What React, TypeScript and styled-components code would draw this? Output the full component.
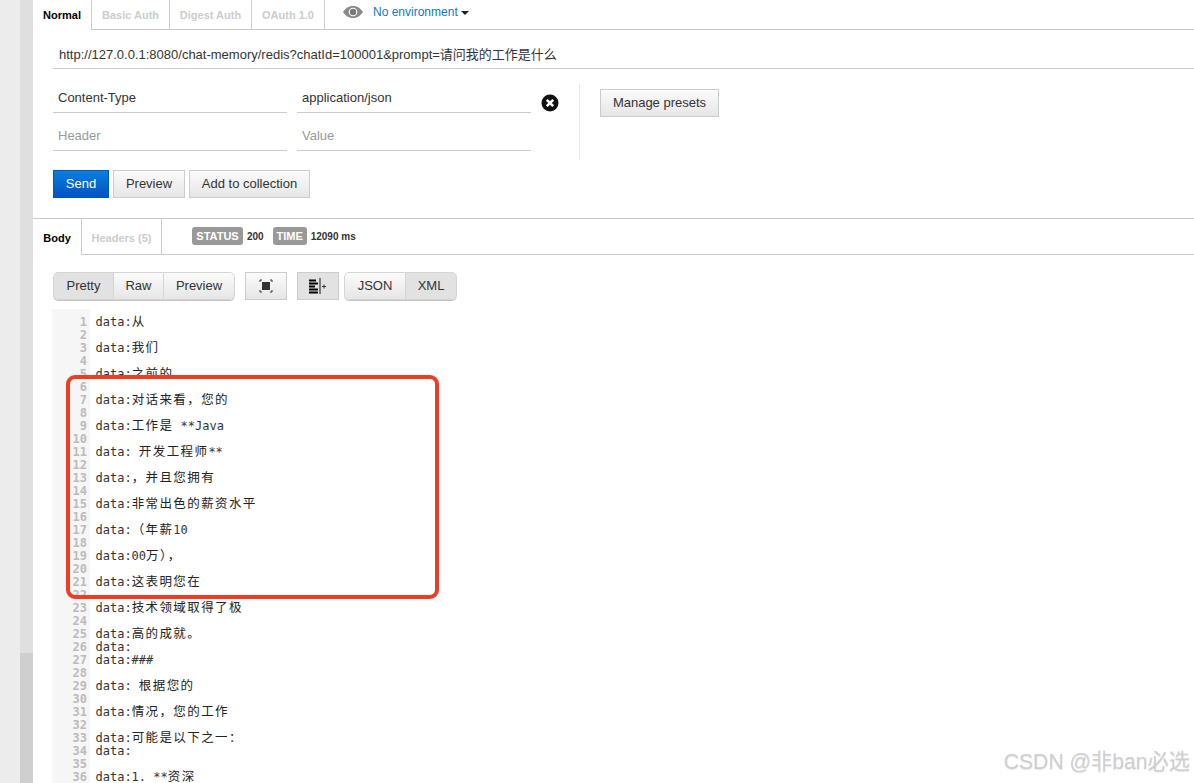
import React from 'react';
import styled, { createGlobalStyle } from 'styled-components';

const GlobalStyle = createGlobalStyle`
    html, body {
        margin: 0;
        height: 783px;
        overflow: hidden;
        background: #fff;
        font-family: "Liberation Sans", Arial, "Noto Sans CJK SC", sans-serif;
    }
`;

const Page = styled.div`
    position: relative;
    display: flex;
    width: 1194px;
    height: 783px;
    overflow: hidden;
`;

const Rail = styled.div`
    width: 20px;
    background: #ececec;
`;

const Scrollbar = styled.div`
    width: 13px;
    display: flex;
    flex-direction: column;
    background: #cfcfcf;

    &::before {
        content: "";
        height: 653px;
        background: #dfdfdf;
    }
`;

const Main = styled.div`
    flex: 1;
    min-width: 0;
`;

const TabBar = styled.div<{ $height: number }>`
    display: flex;
    height: ${p => p.$height}px;
    box-sizing: border-box;
    border-bottom: 1px solid #ccc;
`;

const Tab = styled.div<{ $width: number; $active?: boolean; $drop?: number }>`
    width: ${p => p.$width}px;
    box-sizing: border-box;
    display: flex;
    align-items: center;
    justify-content: center;
    padding-top: ${p => p.$drop ?? 0}px;
    font-size: 11px;
    font-weight: bold;
    color: ${p => (p.$active ? '#000' : '#ccc')};
    border-right: 1px solid #ccc;
    background: #fff;
    margin-bottom: ${p => (p.$active ? '-1px' : '0')};
`;

const Environment = styled.div`
    display: flex;
    align-items: center;
    margin-left: 18px;
    height: 24px;
    font-size: 12px;
    color: #0f7ac6;
`;

const EnvironmentName = styled.span`
    margin-left: 10px;
`;

const Caret = styled.span`
    width: 0;
    height: 0;
    margin-left: 3px;
    margin-top: 2px;
    border-left: 4px solid transparent;
    border-right: 4px solid transparent;
    border-top: 4px solid #222;
`;

const Builder = styled.div`
    padding: 10px 0 20px 20px;
    height: 188px;
    box-sizing: border-box;
`;

const UrlField = styled.div`
    height: 29px;
    box-sizing: border-box;
    padding: 7px 0 0 6px;
    font-size: 13px;
    line-height: 16px;
    color: #333;
    border-bottom: 1px solid #ccc;
`;

const HeaderArea = styled.div`
    display: flex;
    margin-top: 15px;
    height: 76px;
`;

const HeaderGrid = styled.div`
    display: grid;
    grid-template-columns: 234px 234px;
    grid-auto-rows: 29px;
    column-gap: 10px;
    row-gap: 9px;
`;

const HeaderCell = styled.div<{ $placeholder?: boolean }>`
    box-sizing: border-box;
    padding: 6px 0 0 5px;
    font-size: 13px;
    line-height: 16px;
    color: ${p => (p.$placeholder ? '#999' : '#333')};
    border-bottom: 1px solid #ccc;
`;

const RemoveIcon = styled.svg`
    width: 18px;
    height: 18px;
    margin: 10px 0 0 10px;
`;

const Divider = styled.div`
    width: 1px;
    margin-left: 20px;
    background: #e8e8e8;
`;

const Button = styled.div<{ $width: number; $pressed?: boolean }>`
    width: ${p => p.$width}px;
    height: 28px;
    box-sizing: border-box;
    display: flex;
    align-items: center;
    justify-content: center;
    padding-bottom: 2px;
    font-size: 13px;
    color: #333;
    border: 1px solid #ccc;
    background: ${p =>
        p.$pressed ? '#e2e2e2' : 'linear-gradient(#fbfbfb, #e6e6e6)'};
`;

const PresetsButton = styled(Button)`
    margin: 5px 0 0 20px;
`;

const ActionRow = styled.div`
    display: flex;
    gap: 4px;
    margin-top: 10px;
`;

const SendButton = styled(Button)`
    color: #fff;
    border: 1px solid #0055b8;
    background: linear-gradient(#0a80dd, #0052c2);
`;

const ResponseTop = styled.div`
    border-top: 1px solid #ccc;
`;

const StatusGroup = styled.div`
    display: flex;
    align-items: center;
    height: 18px;
    margin: 8px 0 0 30px;
`;

const Badge = styled.span<{ $width: number }>`
    width: ${p => p.$width}px;
    height: 18px;
    box-sizing: border-box;
    display: flex;
    align-items: center;
    justify-content: center;
    border-radius: 3px;
    background: #999;
    color: #fff;
    font-size: 11px;
    font-weight: bold;
`;

const StatusValue = styled.span<{ $gap: number }>`
    margin: 0 ${p => p.$gap}px 0 4px;
    font-size: 10px;
    font-weight: bold;
    color: #333;
`;

const Toolbar = styled.div`
    display: flex;
    margin: 17px 0 0 20px;
`;

const Segment = styled.div<{ $gap?: number }>`
    display: flex;
    margin-right: ${p => p.$gap ?? 0}px;
    border-radius: 5px;
    overflow: hidden;
    box-shadow: 0 1px 0 #c4c4c4;
`;

const SegmentButton = styled(Button)`
    border-width: 1px 0 1px 1px;
    border-color: #d4d4d4;

    &:first-child {
        border-radius: 5px 0 0 5px;
    }

    &:last-child {
        border-right-width: 1px;
        border-radius: 0 5px 5px 0;
    }
`;

const IconButton = styled(Button)<{ $gap: number }>`
    margin-right: ${p => p.$gap}px;
    padding-bottom: 0;
`;

const CodeBlock = styled.div`
    display: grid;
    grid-template-columns: 38px 1fr;
    margin: 9px 0 0 19px;
    padding-top: 7px;
    font-family: "DejaVu Sans Mono", "Liberation Mono", monospace;
    font-size: 12px;
    line-height: 13px;
    background: linear-gradient(to right, #f6f6f6 38px, #fff 38px);
`;

const LineNumber = styled.div`
    height: 13px;
    padding-right: 3px;
    text-align: right;
    color: #bbb;
    font-weight: bold;
`;

const LineText = styled.div`
    height: 13px;
    padding-left: 5.5px;
    color: #333;
    white-space: pre;
`;

const Wide = styled.span`
    font-family: "Noto Sans CJK SC", sans-serif;
    font-size: 12.5px;
    line-height: 0;
    letter-spacing: 1.4px;
    color: #222;
`;

const Highlight = styled.div`
    position: absolute;
    left: 66px;
    top: 375px;
    width: 373px;
    height: 224px;
    box-sizing: border-box;
    border: 4px solid #ee3d25;
    border-radius: 9px;
`;

const Watermark = styled.div`
    position: absolute;
    right: 4px;
    bottom: 8px;
    font-size: 21.2px;
    line-height: 26px;
    color: #cfcfcf;
    text-shadow: 0 1px 1px #e8e8e8;
    font-family: "Liberation Sans", "Noto Sans CJK SC", sans-serif;
`;

const requestTabs = [
    { label: 'Normal', width: 59, active: true },
    { label: 'Basic Auth', width: 78 },
    { label: 'Digest Auth', width: 82 },
    { label: 'OAuth 1.0', width: 73 },
];

const codeLines: Record<number, string> = {
    1: 'data:从',
    3: 'data:我们',
    5: 'data:之前的',
    7: 'data:对话来看，您的',
    9: 'data:工作是 **Java',
    11: 'data: 开发工程师**',
    13: 'data:，并且您拥有',
    15: 'data:非常出色的薪资水平',
    17: 'data:（年薪10',
    19: 'data:00万），',
    21: 'data:这表明您在',
    23: 'data:技术领域取得了极',
    25: 'data:高的成就。',
    26: 'data:',
    27: 'data:###',
    29: 'data: 根据您的',
    31: 'data:情况，您的工作',
    33: 'data:可能是以下之一：',
    34: 'data:',
    36: 'data:1. **资深',
};

// chinese runs get their own font and spacing so they line up double width
const renderCode = (text: string) =>
    text.split(/([\u3000-\u9fff\uff00-\uffef]+)/).map((part, i) =>
        i % 2 === 1 ? <Wide key={i}>{part}</Wide> : part
    );

const App: React.FC = () => {
    return (
        <Page>
            <GlobalStyle />
            <Rail />
            <Scrollbar />
            <Main>
                <TabBar $height={30}>
                    {requestTabs.map(tab => (
                        <Tab key={tab.label} $width={tab.width} $active={tab.active}>
                            {tab.label}
                        </Tab>
                    ))}
                    <Environment>
                        <svg width="20" height="12" viewBox="0 0 20 12">
                            <path d="M0 6C3 1.500 6.500 0 10 0s7 1.500 10 6c-3 4.500-6.500 6-10 6S3 10.500 0 6z" fill="#8a8a8a" />
                            <circle cx="10" cy="6" r="4.300" fill="#fff" />
                            <circle cx="10" cy="6" r="3.200" fill="#777" />
                        </svg>
                        <EnvironmentName>No environment</EnvironmentName>
                        <Caret />
                    </Environment>
                </TabBar>

                <Builder>
                    <UrlField>http://127.0.0.1:8080/chat-memory/redis?chatId=100001&amp;prompt=请问我的工作是什么</UrlField>
                    <HeaderArea>
                        <HeaderGrid>
                            <HeaderCell>Content-Type</HeaderCell>
                            <HeaderCell>application/json</HeaderCell>
                            <HeaderCell $placeholder>Header</HeaderCell>
                            <HeaderCell $placeholder>Value</HeaderCell>
                        </HeaderGrid>
                        <RemoveIcon viewBox="0 0 18 18">
                            <circle cx="9" cy="9" r="8.500" fill="#111" />
                            <path d="M5.800 5.800l6.400 6.400M12.200 5.800l-6.400 6.400" stroke="#fff" strokeWidth="2.600" />
                        </RemoveIcon>
                        <Divider />
                        <PresetsButton $width={119}>Manage presets</PresetsButton>
                    </HeaderArea>
                    <ActionRow>
                        <SendButton $width={56}>Send</SendButton>
                        <Button $width={72}>Preview</Button>
                        <Button $width={121}>Add to collection</Button>
                    </ActionRow>
                </Builder>

                <ResponseTop>
                    <TabBar $height={36}>
                        <Tab $width={49} $active $drop={2}>Body</Tab>
                        <Tab $width={80} $drop={2}>Headers (5)</Tab>
                        <StatusGroup>
                            <Badge $width={51}>STATUS</Badge>
                            <StatusValue $gap={9}>200</StatusValue>
                            <Badge $width={34}>TIME</Badge>
                            <StatusValue $gap={0}>12090 ms</StatusValue>
                        </StatusGroup>
                    </TabBar>

                    <Toolbar>
                        <Segment $gap={10}>
                            <SegmentButton $width={60} $pressed>Pretty</SegmentButton>
                            <SegmentButton $width={50}>Raw</SegmentButton>
                            <SegmentButton $width={72}>Preview</SegmentButton>
                        </Segment>
                        <IconButton $width={42} $gap={10}>
                            <svg width="14" height="14" viewBox="0 0 14 14">
                                <rect x="3" y="3" width="8" height="8" fill="#333" />
                                <path d="M1 3V1h2M11 1h2v2M13 11v2h-2M3 13H1v-2" stroke="#333" fill="none" />
                            </svg>
                        </IconButton>
                        <IconButton $width={42} $gap={5} $pressed>
                            <svg width="18" height="16" viewBox="0 0 18 16">
                                <path d="M0 2.500h7M0 5.500h9M0 8.500h6M0 11.500h9M0 14.500h9" stroke="#000" strokeWidth="2" />
                                <path d="M11 0v16" stroke="#111" />
                                <path d="M13 8.500h4M15 6.500v4" stroke="#333" />
                            </svg>
                        </IconButton>
                        <Segment>
                            <SegmentButton $width={61}>JSON</SegmentButton>
                            <SegmentButton $width={52} $pressed>XML</SegmentButton>
                        </Segment>
                    </Toolbar>

                    <CodeBlock>
                        {Array.from({ length: 36 }, (_, i) => i + 1).map(n => (
                            <React.Fragment key={n}>
                                <LineNumber>{n}</LineNumber>
                                <LineText>{renderCode(codeLines[n] ?? '')}</LineText>
                            </React.Fragment>
                        ))}
                    </CodeBlock>
                </ResponseTop>
            </Main>
            <Highlight />
            <Watermark>CSDN @非ban必选</Watermark>
        </Page>
    );
};

export default App;
